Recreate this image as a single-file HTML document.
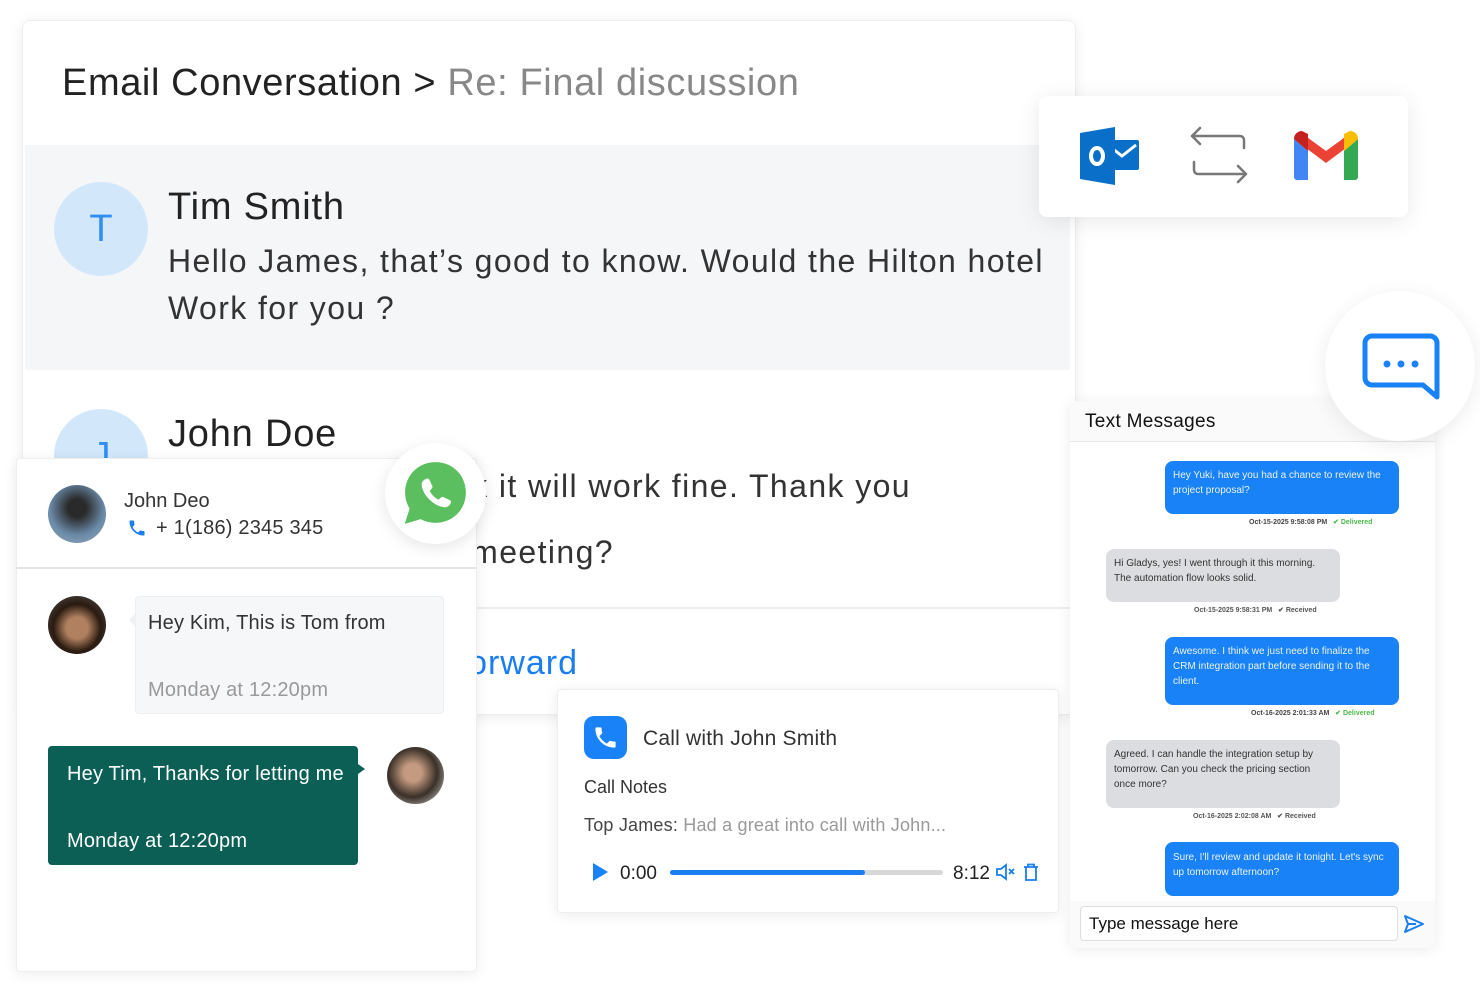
<!DOCTYPE html>
<html><head><meta charset="utf-8"><style>
*{box-sizing:border-box;margin:0;padding:0}
body{width:1480px;height:987px;background:#fff;font-family:"Liberation Sans",sans-serif;position:relative;overflow:hidden;color:#222}
.abs{position:absolute}
.card{position:absolute;background:#fff;border-radius:8px;box-shadow:0 2px 14px rgba(0,0,0,.08)}
.sm{font-size:10px;line-height:15px}
</style></head><body>
<!-- main email card -->
<div class="card" style="left:22px;top:20px;width:1054px;height:695px;border:1px solid #eee"></div>
<div class="abs" style="left:62px;top:62px;font-size:38px;color:#222;white-space:nowrap;letter-spacing:0.6px">Email Conversation &gt; <span style="color:#888">Re: Final discussion</span></div>
<div class="abs" style="left:25px;top:145px;width:1045px;height:225px;background:#f5f6f8"></div>
<div class="abs" style="left:54px;top:182px;width:94px;height:94px;border-radius:50%;background:#d3e7fb;color:#2f8ef4;font-size:38px;text-align:center;line-height:94px">T</div>
<div class="abs" style="left:168px;top:186px;font-size:38px;letter-spacing:0.8px">Tim Smith</div>
<div class="abs" style="left:168px;top:238px;font-size:32px;line-height:47px;color:#333;letter-spacing:1.4px;white-space:nowrap">Hello James, that’s good to know. Would the Hilton hotel<br>Work for you ?</div>
<div class="abs" style="left:54px;top:409px;width:94px;height:94px;border-radius:50%;background:#d3e7fb;color:#2f8ef4;font-size:38px;text-align:center;line-height:94px">J</div>
<div class="abs" style="left:168px;top:413px;font-size:38px;letter-spacing:0.8px">John Doe</div>
<div class="abs" style="right:569px;top:468px;font-size:32px;color:#333;white-space:nowrap;letter-spacing:1.4px">Sounds great, I think it will work fine. Thank you</div>
<div class="abs" style="right:866px;top:534px;font-size:32px;color:#333;white-space:nowrap;letter-spacing:1.4px">for setting up the meeting?</div>
<div class="abs" style="left:25px;top:607px;width:1045px;height:2px;background:#eee"></div>
<div class="abs" style="right:902px;top:644px;font-size:34px;color:#1a7ef0;letter-spacing:1px;white-space:nowrap">Reply &nbsp; Forward</div>

<!-- whatsapp card -->
<div class="card" style="left:16px;top:458px;width:461px;height:514px;border:1px solid #eee;border-radius:4px"></div>
<div class="abs" style="left:16px;top:567px;width:461px;height:2px;background:#e5e5e5"></div>
<div class="abs" style="left:48px;top:485px;width:58px;height:58px;border-radius:50%;background:radial-gradient(circle at 50% 40%,#2a2a2a 20%,#6a8aa8 60%,#9ab 100%)"></div>
<div class="abs" style="left:124px;top:490px;font-size:20px;color:#333">John Deo</div>
<svg class="abs" style="left:127px;top:518px" width="20" height="20" viewBox="0 0 24 24"><path d="M6.6 10.8c1.4 2.8 3.8 5.1 6.6 6.6l2.2-2.2c.3-.3.7-.4 1-.2 1.1.4 2.300 .6 3.6.6.6 0 1 .4 1 1V20c0 .6-.4 1-1 1C10.6 21 3 13.4 3 4c0-.6.4-1 1-1h3.5c.6 0 1 .4 1 1 0 1.3.2 2.5.6 3.6.1.3 0 .7-.2 1z" fill="#1a7ef0"/></svg>
<div class="abs" style="left:156px;top:517px;font-size:20px;color:#333;letter-spacing:0.2px">+ 1(186) 2345 345</div>
<div class="abs" style="left:385px;top:443px;width:101px;height:101px;border-radius:50%;background:#fff;box-shadow:0 4px 16px rgba(0,0,0,.1)"></div>
<svg class="abs" style="left:402px;top:460px" width="67" height="67" viewBox="0 0 64 64"><path d="M32 2C15.4 2 3 14.8 3 31c0 5.6 1.500 10.8 4.3 15.3L2.6 61l15.3-4.5C22 58.8 26.9 60 32 60c16.6 0 29-12.8 29-29S48.6 2 32 2z" fill="#5cbf5f"/><path d="M23 18c1-.5 2.5-.6 3 .5l3 6.5c.3.8 0 1.6-.5 2.2l-2 2.3c1.8 3.8 4.6 6.6 8.4 8.4l2.3-2c.6-.5 1.4-.8 2.2-.5l6.5 3c1.1.5 1 2 .5 3-1.4 3-4 4.2-7 3.6C30 43.5 20.5 34 18.9 25c-.6-3 .6-5.6 4.1-7z" fill="#fff"/></svg>
<div class="abs" style="left:48px;top:596px;width:58px;height:58px;border-radius:50%;background:radial-gradient(circle at 50% 55%,#b08060 25%,#2a1a10 55%,#555 100%)"></div>
<div class="abs" style="left:135px;top:596px;width:309px;height:118px;background:#f6f7f9;border:1px solid #eceef1;border-radius:4px"></div>
<div class="abs" style="left:122px;top:613px;width:0;height:0;border:7px solid transparent;border-right:7px solid #f0f1f3"></div>
<div class="abs" style="left:148px;top:612px;font-size:20px;color:#333;letter-spacing:0.2px">Hey Kim, This is Tom from</div>
<div class="abs" style="left:148px;top:679px;font-size:20px;color:#999;letter-spacing:0.2px">Monday at 12:20pm</div>
<div class="abs" style="left:48px;top:746px;width:310px;height:119px;background:#0b5f55;border-radius:4px"></div>
<div class="abs" style="left:358px;top:764px;width:0;height:0;border:5px solid transparent;border-left:7px solid #0b5f55"></div>
<div class="abs" style="left:67px;top:763px;font-size:20px;color:#fff;letter-spacing:0.2px">Hey Tim, Thanks for letting me</div>
<div class="abs" style="left:67px;top:830px;font-size:20px;color:#fff;letter-spacing:0.2px">Monday at 12:20pm</div>
<div class="abs" style="left:387px;top:747px;width:57px;height:57px;border-radius:50%;background:radial-gradient(circle at 45% 45%,#c49a80 20%,#3a3028 55%,#ddd 100%)"></div>

<!-- call card -->
<div class="card" style="left:557px;top:689px;width:502px;height:224px;border:1px solid #eee;border-radius:4px"></div>
<div class="abs" style="left:584px;top:716px;width:43px;height:43px;border-radius:10px;background:#1a82f7"></div>
<svg class="abs" style="left:592px;top:724px" width="27" height="27" viewBox="0 0 24 24"><path d="M6.6 10.8c1.4 2.8 3.8 5.1 6.6 6.6l2.2-2.2c.3-.3.7-.4 1-.2 1.1.4 2.3.6 3.6.6.6 0 1 .4 1 1V20c0 .6-.4 1-1 1C10.6 21 3 13.4 3 4c0-.6.4-1 1-1h3.5c.6 0 1 .4 1 1 0 1.3.2 2.5.6 3.6.1.3 0 .7-.2 1z" fill="#fff"/></svg>
<div class="abs" style="left:643px;top:727px;font-size:21px;color:#333;letter-spacing:0.2px">Call with John Smith</div>
<div class="abs" style="left:584px;top:777px;font-size:18px;color:#333">Call Notes</div>
<div class="abs" style="left:584px;top:815px;font-size:18px;color:#444;letter-spacing:0.2px">Top James: <span style="color:#999">Had a great into call with John...</span></div>
<svg class="abs" style="left:591px;top:862px" width="18" height="20"><path d="M2 1L17 10L2 19z" fill="#1a82f7"/></svg>
<div class="abs" style="left:620px;top:863px;font-size:19px;color:#222">0:00</div>
<div class="abs" style="left:670px;top:870px;width:273px;height:5px;border-radius:3px;background:#d8d8d8"></div>
<div class="abs" style="left:670px;top:870px;width:195px;height:5px;border-radius:3px;background:#1a7ef0"></div>
<div class="abs" style="left:953px;top:863px;font-size:19px;color:#222">8:12</div>
<svg class="abs" style="left:995px;top:863px" width="22" height="18" viewBox="0 0 22 18"><path d="M2 6h4l5-4v14l-5-4H2z" fill="none" stroke="#1a7ef0" stroke-width="1.8"/><path d="M14 6l5 5M19 6l-5 5" stroke="#1a7ef0" stroke-width="1.8"/></svg>
<svg class="abs" style="left:1023px;top:863px" width="16" height="19" viewBox="0 0 16 19"><path d="M1 4h14M5 4V1.5h6V4M3 4v13h10V4" fill="none" stroke="#1a7ef0" stroke-width="1.8"/></svg>

<!-- icons card -->
<div class="card" style="left:1039px;top:96px;width:369px;height:121px;box-shadow:0 4px 24px rgba(0,0,0,.09)"></div>
<svg class="abs" style="left:1080px;top:127px" width="60" height="60" viewBox="0 0 60 60"><rect x="30" y="13" width="29" height="30" rx="2" fill="#0a6fc8"/><path d="M33 22l9 7 14-11" fill="none" stroke="#fff" stroke-width="3"/><path d="M0 6L35 0V58L0 52z" fill="#0a6fc8"/><ellipse cx="17" cy="29" rx="6" ry="8" fill="none" stroke="#fff" stroke-width="4"/></svg>
<svg class="abs" style="left:1188px;top:124px" width="62" height="62" viewBox="0 0 62 62"><path d="M12 4L4 12l8 8M4 12h48a4 4 0 0 1 4 4v8M50 42l8 8-8 8M58 50H10a4 4 0 0 1-4-4v-8" fill="none" stroke="#777" stroke-width="2.5" stroke-linecap="round" stroke-linejoin="round"/></svg>
<svg class="abs" style="left:1294px;top:131px" width="64" height="50" viewBox="0 0 64 50"><path d="M0 8v38a3 3 0 0 0 3 3h11V20z" fill="#4285f4"/><path d="M50 20v29h11a3 3 0 0 0 3-3V8z" fill="#34a853"/><path d="M0 8l32 24L64 8 58 1 32 20 6 1z" fill="#ea4335"/><path d="M0 8l14 12V3L8 0C4 0 0 3 0 8z" fill="#c5221f"/><path d="M64 8L50 20V3l6-3c4 0 8 3 8 8z" fill="#fbbc04"/></svg>

<!-- text messages -->
<div class="card" style="left:1070px;top:401px;width:365px;height:547px;border-radius:6px;background:#fafafa"></div>
<div class="abs" style="left:1070px;top:441px;width:365px;height:460px;background:#fff;border-top:1px solid #e8e8e8"></div>
<div class="abs" style="left:1085px;top:411px;font-size:19px;color:#111;letter-spacing:0.3px">Text Messages</div>
<div class="abs" style="left:1325px;top:291px;width:150px;height:150px;border-radius:50%;background:#fff;box-shadow:0 4px 20px rgba(0,0,0,.08)"></div>
<svg class="abs" style="left:1362px;top:333px" width="78" height="70" viewBox="0 0 78 70"><path d="M10 3h58a7 7 0 0 1 7 7v54l-14-12H10a7 7 0 0 1-7-7V10a7 7 0 0 1 7-7z" fill="none" stroke="#1a82f7" stroke-width="5" stroke-linejoin="round"/><circle cx="25" cy="31" r="3.5" fill="#1a82f7"/><circle cx="39" cy="31" r="3.5" fill="#1a82f7"/><circle cx="53" cy="31" r="3.5" fill="#1a82f7"/></svg>

<div class="abs sm" style="left:1165px;top:461px;width:234px;height:53px;background:#1a82f7;border-radius:8px;color:#e8f2ff;padding:7px 8px">Hey Yuki, have you had a chance to review the project proposal?</div>
<div class="abs" style="left:1249px;top:518px;font-size:7px;color:#444;font-weight:bold">Oct-15-2025 9:58:08 PM &nbsp; <span style="color:#4cb84c">✔ Delivered</span></div>
<div class="abs sm" style="left:1106px;top:549px;width:234px;height:53px;background:#dcdde0;border-radius:8px;color:#333;padding:7px 8px">Hi Gladys, yes! I went through it this morning. The automation flow looks solid.</div>
<div class="abs" style="left:1194px;top:606px;font-size:7px;color:#555;font-weight:bold">Oct-15-2025 9:58:31 PM &nbsp; ✔ Received</div>
<div class="abs sm" style="left:1165px;top:637px;width:234px;height:68px;background:#1a82f7;border-radius:8px;color:#e8f2ff;padding:7px 8px">Awesome. I think we just need to finalize the CRM integration part before sending it to the client.</div>
<div class="abs" style="left:1251px;top:709px;font-size:7px;color:#444;font-weight:bold">Oct-16-2025 2:01:33 AM &nbsp; <span style="color:#4cb84c">✔ Delivered</span></div>
<div class="abs sm" style="left:1106px;top:740px;width:234px;height:68px;background:#dcdde0;border-radius:8px;color:#333;padding:7px 8px">Agreed. I can handle the integration setup by tomorrow. Can you check the pricing section once more?</div>
<div class="abs" style="left:1193px;top:812px;font-size:7px;color:#555;font-weight:bold">Oct-16-2025 2:02:08 AM &nbsp; ✔ Received</div>
<div class="abs sm" style="left:1165px;top:842px;width:234px;height:54px;background:#1a82f7;border-radius:8px;color:#e8f2ff;padding:8px 8px">Sure, I'll review and update it tonight. Let's sync up tomorrow afternoon?</div>
<div class="abs" style="left:1080px;top:906px;width:318px;height:35px;background:#fff;border:1px solid #ddd;border-radius:4px;font-size:17px;color:#111;padding:7px 8px">Type message here</div>
<svg class="abs" style="left:1404px;top:915px" width="20" height="18" viewBox="0 0 20 18"><path d="M1 1l18 8-18 8 3-8zM4 9h8" fill="none" stroke="#1a7ef0" stroke-width="2" stroke-linejoin="round"/></svg>
</body></html>
